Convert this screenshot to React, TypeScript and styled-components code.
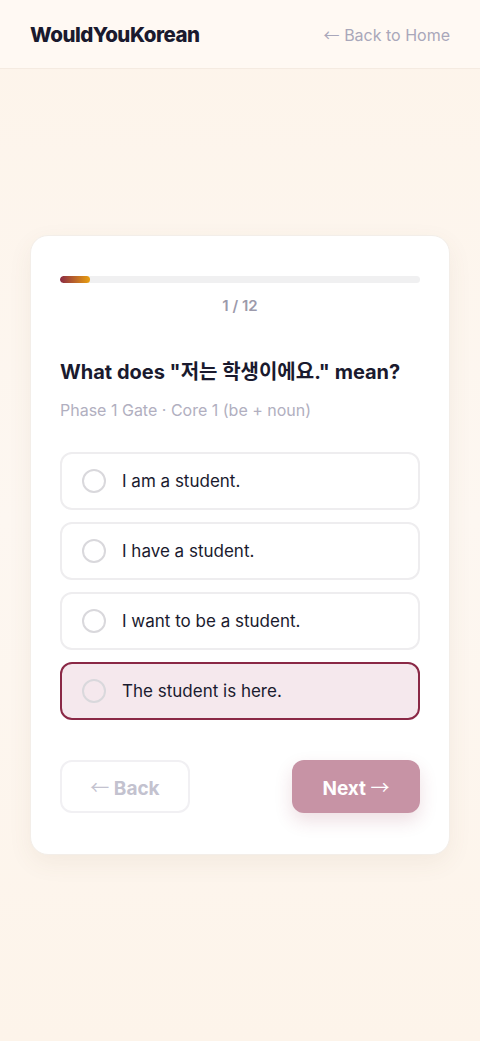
import React, { useState } from "react";
import styled, { createGlobalStyle } from "styled-components";

const GlobalStyle = createGlobalStyle`
  * { box-sizing: border-box; }
  body {
    margin: 0;
    font-family: Inter, "Noto Sans CJK KR", sans-serif;
    background: linear-gradient(180deg, #fdf4ea 0%, #fdf7f1 50%, #fdf4ea 100%);
    min-height: 100vh;
    color: #1a1a2e;
  }
`;

const Header = styled.header`
  height: 69px;
  display: flex;
  align-items: center;
  justify-content: space-between;
  padding: 0 30px;
  background: rgba(255, 251, 246, 0.7);
  border-bottom: 1px solid #f5ebe1;
`;

const Logo = styled.div`
  font-size: 20.5px;
  font-weight: 800;
  letter-spacing: -0.5px;
  color: #1a1a2e;
`;

const HomeLink = styled.a`
  font-size: 16px;
  color: #a9a7ba;
  text-decoration: none;
`;

const Main = styled.main`
  min-height: calc(100vh - 69px);
  display: flex;
  align-items: center;
  justify-content: center;
  padding: 40px 30px 60px;
`;

const Card = styled.div`
  width: 100%;
  background: #fff;
  border-radius: 18px;
  border: 1px solid #f3eee9;
  box-shadow: 0 8px 24px rgba(120, 80, 50, 0.07);
  padding: 40px 29px 41px;
`;

const Track = styled.div`
  height: 7px;
  background: #f0f0f1;
  border-radius: 4px;
  overflow: hidden;
`;

const Fill = styled.div`
  height: 100%;
  border-radius: 4px;
  background: linear-gradient(90deg, #8c2a44, #e9a010);
`;

const Counter = styled.div`
  text-align: center;
  margin-top: 13px;
  font-size: 15px;
  font-weight: 600;
  color: #9c9aab;
`;

const Question = styled.h2`
  margin: 44px 0 0;
  font-size: 20px;
  font-weight: 700;
  line-height: 26px;
  color: #1a1a2e;
`;

const Meta = styled.div`
  margin-top: 15px;
  font-size: 16px;
  color: #b1afc0;
`;

const Options = styled.div`
  margin-top: 32px;
  display: flex;
  flex-direction: column;
  gap: 12px;
`;

const Option = styled.button<{ $selected: boolean }>`
  height: 58px;
  display: flex;
  align-items: center;
  gap: 16px;
  padding: 0 20px;
  border-radius: 12px;
  border: 2px solid ${({ $selected }) => ($selected ? "#8a2846" : "#eeedef")};
  background: ${({ $selected }) => ($selected ? "#f5e8ed" : "#fff")};
  font-family: inherit;
  font-size: 17px;
  color: #1a1a2e;
  text-align: left;
  cursor: pointer;
`;

const Radio = styled.span`
  width: 24px;
  height: 24px;
  border-radius: 50%;
  border: 2px solid #d9d8dc;
  flex-shrink: 0;
`;

const Actions = styled.div`
  margin-top: 40px;
  display: flex;
  justify-content: space-between;
`;

const BackButton = styled.button`
  width: 130px;
  height: 53px;
  border-radius: 12px;
  border: 2px solid #f1f0f3;
  background: #fff;
  font-family: inherit;
  font-size: 19px;
  font-weight: 700;
  color: #c3c2cf;
`;

const NextButton = styled.button`
  width: 128px;
  height: 53px;
  border-radius: 12px;
  border: none;
  background: #c793a5;
  box-shadow: 0 8px 18px rgba(140, 40, 70, 0.15);
  font-family: inherit;
  font-size: 19px;
  font-weight: 700;
  color: #fff;
`;

const Arrow = styled.span`
  font-family: "Noto Sans CJK KR", sans-serif;
  font-weight: 400;
`;

const choices = [
  "I am a student.",
  "I have a student.",
  "I want to be a student.",
  "The student is here.",
];

export default function App() {
  const [selected, setSelected] = useState(3);
  const step = 1;
  const total = 12;

  return (
    <>
      <GlobalStyle />
      <Header>
        <Logo>WouldYouKorean</Logo>
        <HomeLink href="#">
          <Arrow>←</Arrow> Back to Home
        </HomeLink>
      </Header>
      <Main>
        <Card>
          <Track>
            <Fill style={{ width: `${(step / total) * 100}%` }} />
          </Track>
          <Counter>
            {step} / {total}
          </Counter>
          <Question>What does "저는 학생이에요." mean?</Question>
          <Meta>Phase 1 Gate · Core 1 (be + noun)</Meta>
          <Options>
            {choices.map((c, i) => (
              <Option key={c} $selected={i === selected} onClick={() => setSelected(i)}>
                <Radio />
                {c}
              </Option>
            ))}
          </Options>
          <Actions>
            <BackButton>
              <Arrow>←</Arrow> Back
            </BackButton>
            <NextButton>
              Next <Arrow>→</Arrow>
            </NextButton>
          </Actions>
        </Card>
      </Main>
    </>
  );
}
